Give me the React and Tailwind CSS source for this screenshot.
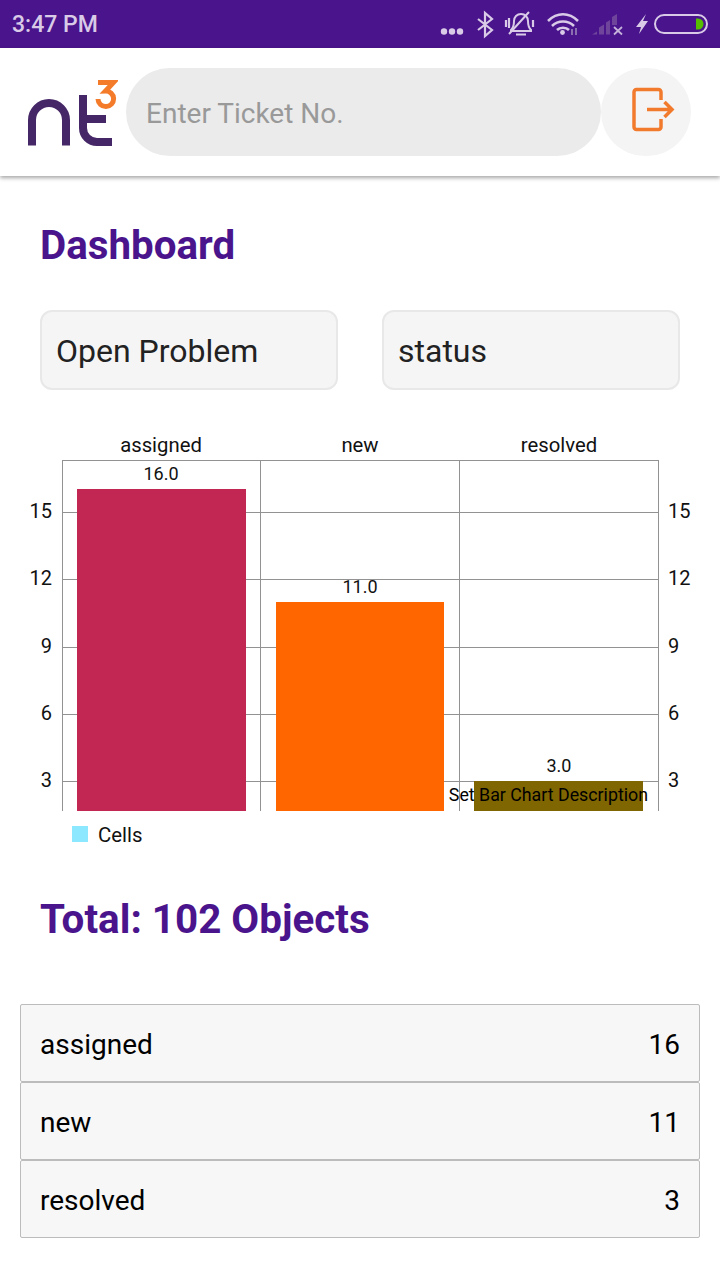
import React from 'react';

const font = { chart: 'Roboto, sans-serif' };

const rows = [
  { name: 'assigned', count: 16 },
  { name: 'new', count: 11 },
  { name: 'resolved', count: 3 },
];

const grid = [
  { y: 512, label: '15' },
  { y: 579, label: '12' },
  { y: 647, label: '9' },
  { y: 714, label: '6' },
  { y: 781, label: '3' },
];

const bars = [
  { x: 77, w: 169, top: 489, color: '#c12752', label: 'assigned', value: '16.0', cx: 161 },
  { x: 276, w: 168, top: 602, color: '#ff6600', label: 'new', value: '11.0', cx: 360 },
  { x: 474, w: 169, top: 781, color: '#806600', label: 'resolved', value: '3.0', cx: 559 },
];

const StatusIcons = () => (
  <svg className="block w-[272px] h-12" viewBox="438 0 272 48" fill="none">
    <circle cx="444" cy="31.5" r="3.2" fill="#d9cbe8" />
    <circle cx="452" cy="31.5" r="3.2" fill="#d9cbe8" />
    <circle cx="460" cy="31.5" r="3.2" fill="#d9cbe8" />
    <path d="M478 19l14 11-7 6V13l7 6-14 11" stroke="#d9cbe8" strokeWidth="2.2" />
    {/* muted bell */}
    <path d="M511 30c2-2 3-5 3-9 0-4 3-7 7-7s7 3 7 7c0 4 1 7 3 9v1h-20z" stroke="#d9cbe8" strokeWidth="2" />
    <path d="M516 34.500h10M509 34l20-22" stroke="#d9cbe8" strokeWidth="2" />
    <path d="M506 20v7M509 18v10M533 20v7" stroke="#d9cbe8" strokeWidth="2.2" />
    {/* wifi */}
    <path d="M548 21c9-9 21-9 30 0M552 26c6-6 16-6 22 0M557 30c3-3 9-3 12 0" stroke="#d9cbe8" strokeWidth="2.6" />
    <circle cx="562.500" cy="32.500" r="2.400" fill="#d9cbe8" />
    <path d="M572 29v6M576 28v7" stroke="#8a6fb0" strokeWidth="2" />
    {/* signal, no sim */}
    <path d="M592 34.500l5-3v3zM599 34.500v-7l5-3v10zM606 34.500v-12l4-2.500v14.500z" fill="#6f459c" />
    <path d="M612 25v-8l5-3v11z" fill="#6f459c" />
    <path d="M614 27l8 7.500M622 27l-8 7.500" stroke="#c4b2da" strokeWidth="1.800" />
    {/* charging */}
    <path d="M646 14l-10 13h5l-2 7 9-13h-5z" fill="#d9cbe8" />
    {/* battery */}
    <rect x="655" y="15" width="52" height="18" rx="9" stroke="#d9cbe8" strokeWidth="2" />
    <path d="M696 18.500h2a5.500 5.500 0 0 1 0 11h-2z" fill="#56c000" />
  </svg>
);

const Logo = () => (
  <svg className="block w-[90px] h-[70px] shrink-0" viewBox="28 77 90 70" fill="none">
    <path d="M32 145.500V120a17 17 0 0 1 34 0v25.500" stroke="#452667" strokeWidth="8" />
    <path d="M83 95v33a14 14 0 0 0 14 14h15M83 119h23" stroke="#452667" strokeWidth="8" />
    <path d="M98 82.500h15.500l-8 8.500a7.800 7.800 0 1 1-7.500 8" stroke="#f47b2a" strokeWidth="5" />
  </svg>
);

const LogoutIcon = () => (
  <svg className="block w-[90px] h-[88px]" viewBox="601 68 90 88" fill="none" stroke="#f27a2c" strokeWidth="3.500">
    <path d="M661 100v-8a2.500 2.500 0 0 0-2.500-2.500h-22a2.500 2.500 0 0 0-2.500 2.500v35a2.500 2.500 0 0 0 2.500 2.500h22a2.500 2.500 0 0 0 2.500-2.500v-8" />
    <path d="M647 109.500h24M664.500 102l7.500 7.500-7.500 7.500" />
  </svg>
);

const BarChart = () => (
  <svg className="block w-[720px] h-[430px]" viewBox="0 430 720 430" fill="none" style={{ fontFamily: font.chart }}>
    <path d="M62.500 460.500H658.500M62.500 460v351M260.500 460v351M459.500 460v351M658.500 460v351" stroke="#929292" strokeWidth="1" />
    {grid.map(g => (
      <g key={g.y}>
        <path d={`M62 ${g.y}.5H658`} stroke="#929292" strokeWidth="1" />
        <text x="52" y={g.y + 6} textAnchor="end" fontSize="20" fill="#111">{g.label}</text>
        <text x="668" y={g.y + 6} fontSize="20" fill="#111">{g.label}</text>
      </g>
    ))}
    {bars.map(b => (
      <g key={b.label}>
        <rect x={b.x} y={b.top} width={b.w} height={811 - b.top} fill={b.color} />
        <text x={b.cx} y="452" textAnchor="middle" fontSize="20.300" fill="#111">{b.label}</text>
        <text x={b.cx} y={b.top - 9} textAnchor="middle" fontSize="18" fill="#111">{b.value}</text>
      </g>
    ))}
    <text x="648" y="801" textAnchor="end" fontSize="17.800" fill="#000">Set Bar Chart Description</text>
    <rect x="72" y="826" width="16" height="16" fill="#8ce8ff" />
    <text x="98" y="842" fontSize="20.400" fill="#111">Cells</text>
  </svg>
);

const App = () => {
  return (
    <div className="w-[720px] h-[1280px] bg-white overflow-hidden font-['Roboto',sans-serif]">
      <div className="h-12 bg-[#4a148c] flex items-center justify-between pl-3 pr-[10px]">
        <span className="pt-0.5 text-[23px] font-medium text-[#d9cbe8]">3:47 PM</span>
        <StatusIcons />
      </div>

      <div className="relative h-[128px] bg-white flex items-center pl-7 shadow-[0_2px_4px_rgba(0,0,0,0.35)]">
        <Logo />
        <input
          className="ml-2 w-[475px] h-[88px] rounded-[44px] bg-[#ebebeb] pl-5 pt-0.5 text-[28px] outline-none placeholder-[#999999]"
          placeholder="Enter Ticket No."
        />
        <div className="w-[90px] h-[88px] rounded-full bg-[#f4f4f4]">
          <LogoutIcon />
        </div>
      </div>

      <h1 className="mt-[47px] ml-10 text-[40.3px] leading-[46px] font-bold text-[#4a148c]">Dashboard</h1>

      <div className="mt-[41px] mx-10 flex justify-between">
        {['Open Problem', 'status'].map(label => (
          <div
            key={label}
            className="w-[298px] h-20 flex items-center pl-[14px] pt-0.5 bg-[#f5f5f5] border-2 border-[#e8e8e8] rounded-xl text-[32px] text-[#222222]"
          >
            {label}
          </div>
        ))}
      </div>

      <div className="mt-10">
        <BarChart />
      </div>

      <h2 className="mt-[37px] ml-10 text-[40.4px] leading-[46px] font-bold text-[#4a148c]">Total: 102 Objects</h2>

      <div className="mt-[61px] mx-5">
        {rows.map(row => (
          <div
            key={row.name}
            className="h-[78px] flex items-center justify-between pl-[19px] pr-[19px] pt-1 bg-[#f7f7f7] border border-[#bcbcbc] rounded-[2px] text-[28px] text-black"
          >
            <span>{row.name}</span>
            <span>{row.count}</span>
          </div>
        ))}
      </div>
    </div>
  );
};

export default App;
